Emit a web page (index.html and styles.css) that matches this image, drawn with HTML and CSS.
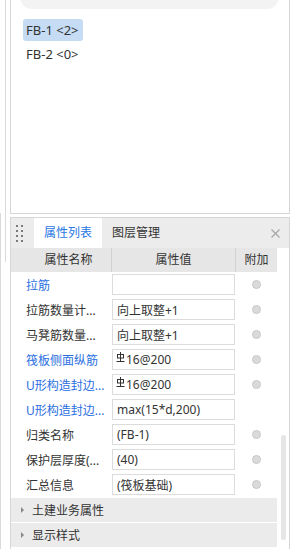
FILE: index.html
```html
<!DOCTYPE html>
<html lang="zh-CN">

<head>
    <meta charset="UTF-8">
    <meta name="viewport" content="width=device-width, initial-scale=1.0">
    <title>构件列表 | 属性列表</title>
    <link rel="stylesheet" href="styles.css">
</head>

<body>
    <section class="list-panel">
        <div class="search">搜索构件...</div>
        <ul class="items">
            <li class="item selected">FB-1 &lt;2&gt;</li>
            <li class="item">FB-2 &lt;0&gt;</li>
        </ul>
    </section>

    <section class="prop-panel">
        <div class="tabs">
            <span class="grip"><i></i><i></i><i></i><i></i><i></i><i></i><i></i><i></i></span>
            <span class="tab active">属性列表</span>
            <span class="tab">图层管理</span>
            <svg class="close" width="9" height="9" viewBox="0 0 9 9"><path d="M0.5 0.5L8.5 8.5M8.5 0.5L0.5 8.5" stroke="#a6a6a6" stroke-width="1.2" /></svg>
        </div>

        <div class="prop-body">
            <div class="table">
                <div class="row head">
                    <span class="name">属性名称</span>
                    <span class="value">属性值</span>
                    <span class="extra">附加</span>
                </div>

                <div class="row">
                    <span class="name blue">拉筋</span>
                    <span class="value"><span class="box"></span></span>
                    <span class="extra"><i class="dot"></i></span>
                </div>
                <div class="row">
                    <span class="name">拉筋数量计...</span>
                    <span class="value"><span class="box">向上取整+1</span></span>
                    <span class="extra"><i class="dot"></i></span>
                </div>
                <div class="row">
                    <span class="name">马凳筋数量...</span>
                    <span class="value"><span class="box">向上取整+1</span></span>
                    <span class="extra"><i class="dot"></i></span>
                </div>
                <div class="row">
                    <span class="name blue">筏板侧面纵筋</span>
                    <span class="value"><span class="box"><svg class="bar" width="9" height="10" viewBox="0 0 9 10"><rect x="1.5" y="2.5" width="6" height="3.5" fill="none" stroke="#333" /><path d="M4.5 0V9M0.5 9.5H8.5" stroke="#333" /></svg>16@200</span></span>
                    <span class="extra"><i class="dot"></i></span>
                </div>
                <div class="row">
                    <span class="name blue">U形构造封边...</span>
                    <span class="value"><span class="box"><svg class="bar" width="9" height="10" viewBox="0 0 9 10"><rect x="1.5" y="2.5" width="6" height="3.5" fill="none" stroke="#333" /><path d="M4.5 0V9M0.5 9.5H8.5" stroke="#333" /></svg>16@200</span></span>
                    <span class="extra"><i class="dot"></i></span>
                </div>
                <div class="row">
                    <span class="name blue">U形构造封边...</span>
                    <span class="value"><span class="box">max(15*d,200)</span></span>
                    <span class="extra"></span>
                </div>
                <div class="row">
                    <span class="name">归类名称</span>
                    <span class="value"><span class="box">(FB-1)</span></span>
                    <span class="extra"><i class="dot"></i></span>
                </div>
                <div class="row">
                    <span class="name">保护层厚度(...</span>
                    <span class="value"><span class="box">(40)</span></span>
                    <span class="extra"><i class="dot"></i></span>
                </div>
                <div class="row">
                    <span class="name">汇总信息</span>
                    <span class="value"><span class="box">(筏板基础)</span></span>
                    <span class="extra"><i class="dot"></i></span>
                </div>

                <div class="group"><span class="arrow"></span>土建业务属性</div>
                <div class="group"><span class="arrow"></span>显示样式</div>
            </div>

            <div class="scroll"><span class="thumb"></span></div>
        </div>
    </section>
</body>

</html>
```

FILE: styles.css
```css
* {
    margin: 0;
    padding: 0;
    box-sizing: border-box;
}

body {
    width: 292px;
    height: 549px;
    overflow: hidden;

    font-family: "Noto Sans", "Noto Sans CJK SC", sans-serif;
    font-size: 12px;
    color: #333;

    background:
        linear-gradient(#dadada, #dadada) 5px 0 / 1px 262px no-repeat,
        linear-gradient(#dadada, #dadada) 0 213px / 1px 336px no-repeat,
        #fff;
}

/* top panel: component list */
.list-panel {
    width: 280px;
    height: 214px;
    margin-left: 10px;

    border: solid 1px #d6d6d6;
    border-top: none;

    overflow: hidden;
}

.search {
    height: 24px;
    margin: -15px 10px 0 9px;
    padding-left: 12px;

    line-height: 20px;
    color: #9a9a9a;

    background-color: #f3f3f3;
    border-radius: 12px;
}

.search + .items {
    margin-top: -2px;
}

.items {
    list-style: none;
    padding: 12px 0 0 12px;
}

.item {
    display: table;
    height: 22px;
    margin-bottom: 2px;
    padding: 0 4px 0 3px;

    font-size: 13px;
    line-height: 22px;
}

.selected {
    background-color: #c5dcf4;
    border-radius: 3px;
}

/* bottom panel: properties */
.prop-panel {
    width: 280px;
    height: 340px;
    margin: 3px 0 0 10px;

    border: solid 1px #d6d6d6;
    border-bottom: none;
}

.tabs {
    display: flex;
    align-items: center;
    height: 30px;

    background-color: #ececec;
}

.grip {
    display: grid;
    grid-template-columns: 2px 2px;
    gap: 3px;
    width: 23px;
    padding-left: 5px;
}

.grip i {
    width: 2px;
    height: 2px;
    background-color: #7a7a7a;
}

.tab {
    height: 30px;
    padding: 0 10px;

    line-height: 30px;
}

.tab.active {
    background-color: #fff;
    color: #2a78e4;
}

.close {
    margin-left: auto;
    margin-right: 9px;
}

.prop-body {
    display: flex;
}

.table {
    width: 266px;
}

.row {
    display: grid;
    grid-template-columns: 100px 124px 42px;
    height: 25px;
    align-items: center;
}

.row.head {
    height: 24px;
    background-color: #e6e6e6;
}

.row.head span {
    height: 24px;
    line-height: 24px;
    text-align: center;
}

.row.head .value,
.row.head .extra {
    border-left: solid 1px #d2d2d2;
}

.name {
    padding-left: 15px;
    white-space: nowrap;
}

.blue {
    color: #2a6fe0;
}

.box {
    display: flex;
    align-items: center;
    width: 123px;
    height: 21px;
    margin-left: 1px;
    padding-left: 4px;

    border: solid 1px #dcdcdc;
}

.bar {
    margin: -5px 1px 0 -1px;
}

.extra {
    display: flex;
    justify-content: center;
}

.dot {
    width: 9px;
    height: 9px;

    background-color: #dadada;
    border: solid 1px #c8c8c8;
    border-radius: 50%;
}

.group {
    display: flex;
    align-items: center;
    height: 24px;
    margin-top: 1px;

    background-color: #ebebeb;
}

.arrow {
    width: 0;
    height: 0;
    margin: 0 8px 0 10px;

    border-left: solid 3px #888;
    border-top: solid 3px transparent;
    border-bottom: solid 3px transparent;
}

.scroll {
    width: 12px;
    padding: 187px 0 0 4px;
}

.thumb {
    display: block;
    width: 5px;
    height: 105px;

    background-color: #e6e6e6;
    border-radius: 2px;
}
```
